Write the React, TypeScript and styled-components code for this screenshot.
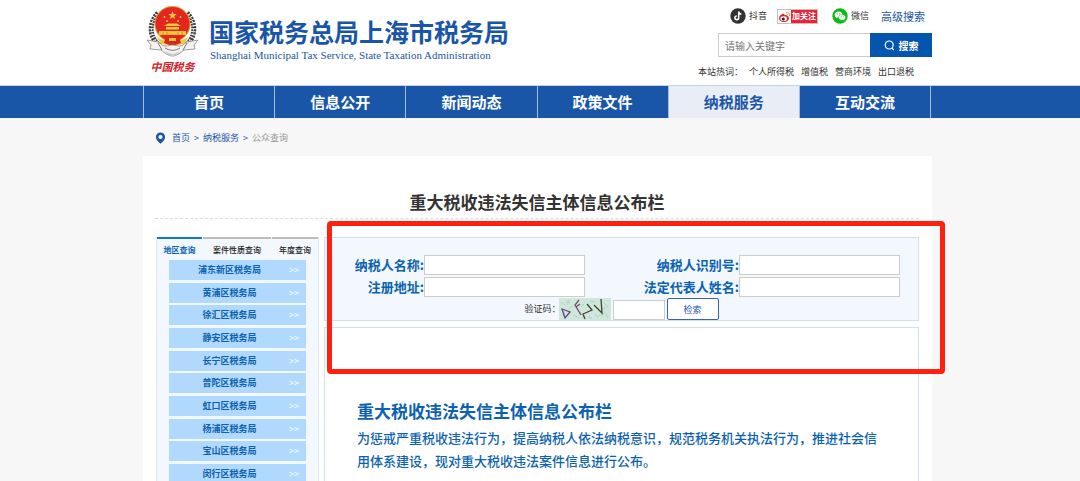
import React from "react";
import styled, { createGlobalStyle } from "styled-components";

const blue = "#1a56a8";
const linkBlue = "#0b62b0";
const lineBlue = "#cfe2f2";
const paleBlue = "#f2f8fd";

const GlobalStyle = createGlobalStyle`
  *, *::before, *::after { box-sizing: border-box; }
  body {
    margin: 0;
    background: #f7f7f7;
    color: #333;
    font-family: "Noto Sans CJK SC", "Liberation Sans", sans-serif;
    font-size: 9px;
  }
  a { color: inherit; text-decoration: none; }
  h1, h2, p, ul, ol { margin: 0; padding: 0; }
  ul, ol { list-style: none; }
  input, button { font-family: inherit; margin: 0; border-radius: 0; }
`;

const Shell = styled.div`
  padding-right: 5px;
`;

const Container = styled.div`
  max-width: 789px;
  margin: 0 auto;
`;

const Top = styled.header`
  background: #fff;
`;

const TopInner = styled(Container)`
  display: flex;
  justify-content: space-between;
  height: 85px;
`;

const Brand = styled.a`
  display: flex;
  gap: 10px;
  padding: 4px 0 0 3px;
`;

const Emblem = styled.span`
  display: flex;
  flex-direction: column;
  align-items: center;
  width: 53px;
`;

const EmblemText = styled.span`
  color: #d3222a;
  font-size: 11px;
  font-style: italic;
  font-weight: 700;
  line-height: 16px;
`;

const BrandNames = styled.span`
  display: flex;
  flex-direction: column;
  padding-top: 12px;
  color: ${blue};
`;

const BrandName = styled.span`
  font-size: 25px;
  font-weight: 700;
  line-height: 30px;
  white-space: nowrap;
`;

const BrandEnglish = styled.span`
  padding-left: 1px;
  font-family: "Liberation Serif", serif;
  font-size: 11px;
  line-height: 18px;
  white-space: nowrap;
`;

const Tools = styled.div`
  display: flex;
  flex-direction: column;
  width: 234px;
  padding-top: 8px;
`;

const Social = styled.div`
  display: flex;
  align-items: center;
  height: 16px;
  padding-left: 32px;
`;

const SocialLink = styled.a<{ $after: number }>`
  display: flex;
  align-items: center;
  gap: 3px;
  margin-right: ${(p) => p.$after}px;
  line-height: 16px;
`;

const WeiboBadge = styled.span`
  display: flex;
  width: 41px;
  height: 15px;
  border: 1px solid #d8b9b9;
  background: #fff;
`;

const WeiboLabel = styled.span`
  flex: 1;
  background: #e9243a;
  color: #fff;
  font-size: 8px;
  font-weight: 700;
  line-height: 12px;
  text-align: center;
  white-space: nowrap;
`;

const Advanced = styled.a`
  color: ${blue};
  font-size: 11px;
  line-height: 16px;
`;

const Search = styled.form`
  display: flex;
  height: 24px;
  margin: 9px 0 0 20px;
`;

const SearchInput = styled.input`
  flex: 1;
  min-width: 0;
  padding: 0 6px;
  border: 1px solid #ccc;
  border-right: 0;
  background: #fff;
  font-size: 10px;
  outline: none;
  &::placeholder { color: #767676; opacity: 1; }
`;

const SearchButton = styled.button`
  display: flex;
  align-items: center;
  justify-content: center;
  gap: 4px;
  width: 62px;
  padding: 0;
  border: 0;
  background: #0455ae;
  color: #fff;
  font-size: 10px;
  font-weight: 700;
`;

const HotWords = styled.div`
  display: flex;
  gap: 7px;
  margin-top: 8px;
  line-height: 14px;
  white-space: nowrap;
`;

const HotLabel = styled.span`
  width: 44px;
`;

const Nav = styled.nav`
  border-top: 1px solid #c3d2e6;
  background: ${blue};
`;

const NavList = styled.ul`
  display: flex;
  margin-right: 1px;
  border-left: 1px solid #a9bcd8;
`;

const NavItem = styled.li`
  flex: 1;
`;

const NavLink = styled.a<{ $active?: boolean }>`
  display: block;
  border-right: 1px solid #a9bcd8;
  background: ${(p) => (p.$active ? "#e8edf6" : "transparent")};
  color: ${(p) => (p.$active ? blue : "#fff")};
  font-size: 15px;
  font-weight: 700;
  line-height: 32px;
  text-align: center;
`;

const Crumbs = styled.nav`
  display: flex;
  align-items: center;
  height: 38px;
  padding: 2px 0 0 12px;
  color: ${blue};
`;

const CrumbList = styled.ol`
  display: flex;
  gap: 4px;
  margin-left: 6px;
  line-height: 14px;
`;

const Crumb = styled.li<{ $current?: boolean }>`
  color: ${(p) => (p.$current ? "#999" : "inherit")};
`;

const Panel = styled.main`
  padding: 32px 13px 0 12px;
  background: #fff;
`;

const PageTitle = styled.h1`
  padding-bottom: 3px;
  border-bottom: 1px dashed #ddd;
  font-size: 17px;
  font-weight: 700;
  line-height: 27px;
  text-align: center;
`;

const Columns = styled.div`
  display: grid;
  grid-template-columns: 163px minmax(0, 1fr);
  gap: 5px;
  padding: 18px 0 0 1px;
`;

const Sidebar = styled.aside`
  border: solid #dce9f5;
  border-width: 0 1px;
  background: ${paleBlue};
`;

const Tabs = styled.div`
  display: grid;
  grid-template-columns: 45px 68px 1fr;
  gap: 1px;
`;

const Tab = styled.button<{ $active?: boolean }>`
  padding: 0;
  border: 0;
  border-top: 2px solid ${(p) => (p.$active ? "#0f78d2" : "#bdbdbd")};
  background: transparent;
  color: ${(p) => (p.$active ? linkBlue : "#222")};
  font-size: 8px;
  font-weight: ${(p) => (p.$active ? 700 : 500)};
  line-height: 21px;
  white-space: nowrap;
`;

const BureauList = styled.ul`
  display: flex;
  flex-direction: column;
  justify-content: space-between;
  min-height: 224px;
  padding: 0 12px;
`;

const BureauLink = styled.a`
  display: grid;
  grid-template-columns: 1fr 17px;
  height: 20px;
  padding-left: 1px;
  background: #b1d9fe;
  color: ${linkBlue};
  font-weight: 700;
  line-height: 20px;
  text-align: center;
`;

const Arrows = styled.span`
  color: #fff;
  font-weight: 400;
  text-align: left;
`;

const Content = styled.div`
  position: relative;
  display: flex;
  flex-direction: column;
  gap: 6px;
`;

const QueryForm = styled.form`
  padding: 17px 18px 0 0;
  border: 1px solid ${lineBlue};
  background: ${paleBlue};
`;

const Fields = styled.div`
  display: grid;
  grid-template-columns: 99px 161px minmax(0, 1fr) 161px;
  row-gap: 2px;
`;

const FieldLabel = styled.label`
  color: ${linkBlue};
  font-size: 13px;
  font-weight: 700;
  line-height: 20px;
  text-align: right;
`;

const TextInput = styled.input`
  width: 100%;
  height: 20px;
  padding: 0 4px;
  border: 1px solid #ccc;
  background: #fff;
  font-size: 11px;
  outline: none;
`;

const CodeRow = styled.div`
  display: flex;
  align-items: flex-end;
  justify-content: center;
  gap: 2px;
  height: 23px;
  padding-left: 18px;
`;

const CodeLabel = styled.label`
  width: 32px;
  line-height: 22px;
  white-space: nowrap;
`;

const CodeInput = styled(TextInput)`
  width: 52px;
`;

const QueryButton = styled.button`
  width: 52px;
  height: 22px;
  padding: 0;
  border: 1px solid #3a62b4;
  border-radius: 2px;
  background: #fff;
  color: ${blue};
  font-size: 9px;
`;

const Article = styled.article`
  padding: 71px 32px 24px;
  border: 1px solid ${lineBlue};
  color: ${linkBlue};
`;

const ArticleTitle = styled.h2`
  font-size: 17px;
  font-weight: 700;
  line-height: 23px;
`;

const ArticleText = styled.p`
  margin-top: 4px;
  font-size: 13px;
  font-weight: 500;
  line-height: 23px;
`;

const Highlight = styled.div`
  position: absolute;
  top: -16px;
  left: 3px;
  right: -26px;
  height: 153px;
  border: 5px solid #ff2010;
  border-radius: 4px;
  pointer-events: none;
`;

const EmblemArt = () => (
  <svg width="53" height="54" viewBox="0 0 53 54" aria-hidden="true">
    <g fill="none" stroke="#3d3a38" strokeWidth="5" strokeDasharray="2 1">
      <path d="M12 9C2 20 3 34 15 43" />
      <path d="M41 9C51 20 50 34 38 43" />
    </g>
    <g fill="none" stroke="#e6e3df" strokeWidth="1" strokeDasharray="2 2">
      <path d="M11 10C2 21 4 34 16 43" />
      <path d="M42 10C51 21 49 34 37 43" />
    </g>
    <circle cx="26.500" cy="20" r="18" fill="#dba032" />
    <circle cx="26.500" cy="20" r="17" fill="#e3261f" />
    <path fill="#f8c63a" d="M26.500 7l1.100 3.100h3.200l-2.600 1.900 1 3.100-2.700-1.900-2.700 1.900 1-3.100-2.600-1.900h3.200z" />
    <g fill="#f8c63a">
      <circle cx="18.500" cy="13" r="1" />
      <circle cx="34.500" cy="13" r="1" />
      <circle cx="21" cy="17" r="1" />
      <circle cx="32" cy="17" r="1" />
      <path d="M18 22l4-2.500h9l4 2.500zM20 23h13v2.500H20zM13 27h27v4H13z" />
      <path d="M11 33c4 3 9 4 15.500 4s11.500-1 15.500-4l-3 6c-4 3-21 3-25 0z" />
    </g>
    <g stroke="#d88a1c" strokeWidth="1"><path d="M17 28v3M21 28v3M32 28v3M36 28v3" /></g>
    <path fill="#d9271f" d="M20 33h13l2 6-8.500 3-8.500-3z" />
    <path fill="#f3c23c" d="M23 34h7v3h-7z" />
    <path
      fill="#f4f3f2"
      stroke="#8b8886"
      strokeWidth=".8"
      d="M1 36l11 2c3 1 4 4 7 4 4 0 5-1 7.500-1s3.500 1 7.500 1c3 0 4-3 7-4l11-2-4 5 1 4-11 1c-4 3-7 6-11.500 6S19 49 15 46L4 45l1-4z"
    />
    <path fill="none" stroke="#777" d="M12 39l4 7M41 39l-4 7M19 44c5 3 10 3 15 0" />
    <path fill="#cfcac6" d="M17 47l9.500 6 9.500-6-9.500 3z" />
  </svg>
);

const DouyinIcon = () => (
  <svg width="16" height="16" viewBox="0 0 16 16" aria-hidden="true">
    <circle cx="8" cy="8" r="7.700" fill="#333" />
    <path
      d="M8.700 3.500v6.300a1.900 1.900 0 1 1-1.900-1.900M8.700 3.700c.2 1.500 1.200 2.400 2.700 2.500"
      fill="none"
      stroke="#fff"
      strokeWidth="1.500"
    />
  </svg>
);

const WeiboIcon = () => (
  <svg width="13" height="13" viewBox="0 0 13 13" aria-hidden="true">
    <path fill="#d8232f" d="M1 8.500C1 6 4.500 3 6 4c.7.400.400 1.200.400 1.200S9 4.500 9 6c1.400.300 2 1 2 2.200C11 10.300 8.500 12 5.800 12S1 10.500 1 8.500z" />
    <ellipse cx="5.700" cy="8.700" rx="3.300" ry="2.400" fill="#fff" />
    <circle cx="5.300" cy="8.900" r="1.500" fill="#222" />
    <path fill="none" stroke="#f19a2b" d="M8 2.300c2.400-.5 4 1.200 3.500 3.600M8.400 4c1-.1 1.600.6 1.400 1.500" />
  </svg>
);

const WechatIcon = () => (
  <svg width="16" height="16" viewBox="0 0 16 16" aria-hidden="true">
    <circle cx="8" cy="8" r="7.700" fill="#0cbb12" />
    <path fill="#fff" d="M6.500 3.500C4.300 3.500 2.600 4.900 2.600 6.700c0 1 .5 1.800 1.400 2.400l-.4 1.200 1.500-.7 1.400.2c2.200 0 3.900-1.400 3.900-3.100S8.700 3.500 6.500 3.500z" />
    <path fill="#fff" stroke="#0cbb12" strokeWidth=".5" d="M10.100 6.500c-2 0-3.400 1.300-3.400 2.900s1.400 2.900 3.400 2.900l1.200-.2 1.200.6-.3-1c.8-.6 1.300-1.400 1.300-2.300 0-1.600-1.500-2.900-3.400-2.900z" />
    <g fill="#0cbb12">
      <circle cx="5.300" cy="6" r=".6" />
      <circle cx="7.800" cy="6" r=".6" />
      <circle cx="9" cy="8.800" r=".5" />
      <circle cx="11.200" cy="8.800" r=".5" />
    </g>
  </svg>
);

const SearchIcon = () => (
  <svg width="11" height="11" viewBox="0 0 11 11" fill="none" stroke="#fff" strokeWidth="1.200" aria-hidden="true">
    <circle cx="5.200" cy="5" r="4" />
    <path d="M7.800 8l2 2.200" />
  </svg>
);

const PinIcon = () => (
  <svg width="11" height="12" viewBox="0 0 11 12" aria-hidden="true">
    <path fill={blue} fillRule="evenodd" d="M5.500.4A4.600 4.600 0 0 0 .9 5c0 2.800 2.300 5 4.600 6.800C7.800 10 10.100 7.800 10.100 5A4.600 4.600 0 0 0 5.500.4zm0 2.500a2.100 2.100 0 1 1 0 4.200 2.100 2.100 0 0 1 0-4.200z" />
  </svg>
);

const Captcha = () => (
  <svg width="52" height="22" viewBox="0 0 52 22" role="img" aria-label="验证码图片">
    <path fill="#cde8da" d="M0 0h52v22H0z" />
    <g fill="none" stroke="#a9cdb9" strokeWidth=".8">
      <path d="M2 4l4 3M10 2l-2 5M15 17l5 3M31 3l5 1M45 5l4 4M39 18l6-2M3 18l3-4M25 6l-3 3M46 15l3 4" />
    </g>
    <g fill="none" stroke="#c4b6d6" strokeWidth=".8">
      <path d="M7 3l4 2M36 16l3 4M20 13l3 4M42 12l5-3M29 19l4 1M13 8l-3 3" />
    </g>
    <g fill="none" strokeWidth="1.300">
      <path stroke="#6b3f87" d="M3 11l8 3-5 6zM3 11l3 9" />
      <path stroke="#76506a" d="M20 2l-4 5 6 10M17 9l4-3" />
      <path stroke="#46402f" d="M28 6l5 6-9 4 2 5" />
      <path stroke="#46402f" d="M35 7l8 8-1-14" />
    </g>
  </svg>
);

const navItems = ["首页", "信息公开", "新闻动态", "政策文件", "纳税服务", "互动交流"];
const hotWords = ["个人所得税", "增值税", "营商环境", "出口退税"];
const tabs = ["地区查询", "案件性质查询", "年度查询"];
const bureaus = ["浦东新区", "黄浦区", "徐汇区", "静安区", "长宁区", "普陀区", "虹口区", "杨浦区", "宝山区", "闵行区"];
const fields = [
  { id: "name", label: "纳税人名称:" },
  { id: "taxid", label: "纳税人识别号:" },
  { id: "address", label: "注册地址:" },
  { id: "legal", label: "法定代表人姓名:" },
];

const keepPage = (e: React.FormEvent) => e.preventDefault();

export default function App() {
  return (
    <>
      <GlobalStyle />
      <Top>
        <Shell>
          <TopInner>
            <Brand href="#">
              <Emblem>
                <EmblemArt />
                <EmblemText>中国税务</EmblemText>
              </Emblem>
              <BrandNames>
                <BrandName>国家税务总局上海市税务局</BrandName>
                <BrandEnglish>Shanghai Municipal Tax Service, State Taxation Administration</BrandEnglish>
              </BrandNames>
            </Brand>
            <Tools>
              <Social>
                <SocialLink href="#" $after={10}>
                  <DouyinIcon />
                  抖音
                </SocialLink>
                <SocialLink href="#" $after={14}>
                  <WeiboBadge>
                    <WeiboIcon />
                    <WeiboLabel>加关注</WeiboLabel>
                  </WeiboBadge>
                </SocialLink>
                <SocialLink href="#" $after={12}>
                  <WechatIcon />
                  微信
                </SocialLink>
                <Advanced href="#">高级搜索</Advanced>
              </Social>
              <Search role="search" onSubmit={keepPage}>
                <SearchInput type="text" aria-label="关键字" placeholder="请输入关键字" />
                <SearchButton type="submit">
                  <SearchIcon />
                  搜索
                </SearchButton>
              </Search>
              <HotWords>
                <HotLabel>本站热词：</HotLabel>
                {hotWords.map((w) => (
                  <a key={w} href="#">{w}</a>
                ))}
              </HotWords>
            </Tools>
          </TopInner>
        </Shell>
      </Top>
      <Nav>
        <Shell>
          <Container>
            <NavList>
              {navItems.map((item) => (
                <NavItem key={item}>
                  <NavLink href="#" $active={item === "纳税服务"}>{item}</NavLink>
                </NavItem>
              ))}
            </NavList>
          </Container>
        </Shell>
      </Nav>
      <Shell>
        <Container>
          <Crumbs aria-label="当前位置">
            <PinIcon />
            <CrumbList>
              <Crumb><a href="#">首页</a></Crumb>
              <Crumb>&gt;</Crumb>
              <Crumb><a href="#">纳税服务</a></Crumb>
              <Crumb>&gt;</Crumb>
              <Crumb $current>公众查询</Crumb>
            </CrumbList>
          </Crumbs>
          <Panel>
            <PageTitle>重大税收违法失信主体信息公布栏</PageTitle>
            <Columns>
              <Sidebar>
                <Tabs>
                  {tabs.map((t, i) => (
                    <Tab key={t} type="button" $active={i === 0}>{t}</Tab>
                  ))}
                </Tabs>
                <BureauList>
                  {bureaus.map((b) => (
                    <li key={b}>
                      <BureauLink href="#">
                        <span>{b}税务局</span>
                        <Arrows>&gt;&gt;</Arrows>
                      </BureauLink>
                    </li>
                  ))}
                </BureauList>
              </Sidebar>
              <Content>
                <QueryForm onSubmit={keepPage}>
                  <Fields>
                    {fields.map((f) => (
                      <React.Fragment key={f.id}>
                        <FieldLabel htmlFor={f.id}>{f.label}</FieldLabel>
                        <TextInput id={f.id} type="text" />
                      </React.Fragment>
                    ))}
                  </Fields>
                  <CodeRow>
                    <CodeLabel htmlFor="code">验证码：</CodeLabel>
                    <Captcha />
                    <CodeInput id="code" type="text" />
                    <QueryButton type="submit">检索</QueryButton>
                  </CodeRow>
                </QueryForm>
                <Article>
                  <ArticleTitle>重大税收违法失信主体信息公布栏</ArticleTitle>
                  <ArticleText>
                    为惩戒严重税收违法行为，提高纳税人依法纳税意识，规范税务机关执法行为，推进社会信用体系建设，现对重大税收违法案件信息进行公布。
                  </ArticleText>
                </Article>
                <Highlight />
              </Content>
            </Columns>
          </Panel>
        </Container>
      </Shell>
    </>
  );
}
